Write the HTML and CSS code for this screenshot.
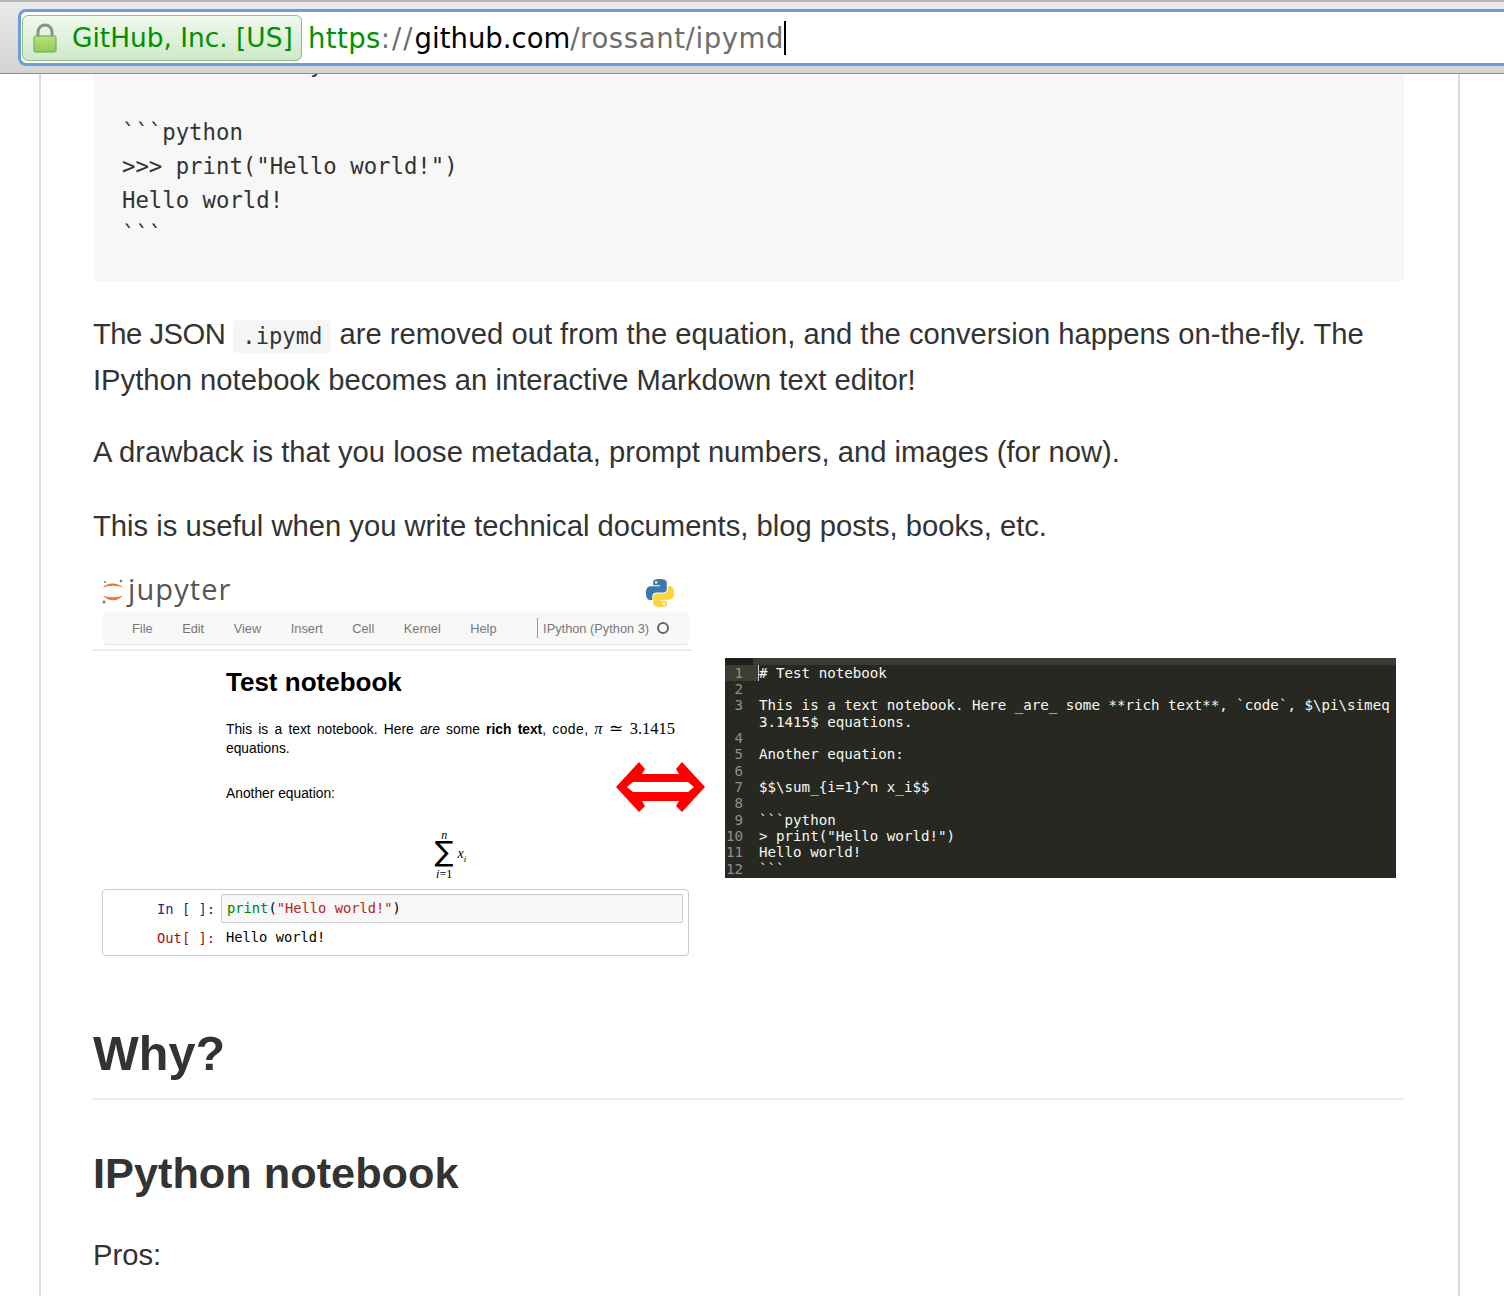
FILE: index.html

```html
<!DOCTYPE html>
<html lang="en">
<head>
  <meta charset="UTF-8" />
  <title>github.com/rossant/ipymd</title>
  <link rel="stylesheet" href="styles.css">
</head>
<body>
  <div class="toolbar">
    <div class="urlbar">
      <div class="identity">
        <svg class="lock" viewBox="0 0 24 30" width="24" height="30">
          <defs>
            <linearGradient id="lockBody" x1="0" y1="0" x2="0" y2="1">
              <stop offset="0" stop-color="#b7e37f"/>
              <stop offset="1" stop-color="#8fca5c"/>
            </linearGradient>
          </defs>
          <path d="M5 14V9a7 7 0 0 1 14 0v5" fill="none" stroke="#8f8f8f" stroke-width="3"/>
          <rect x="1" y="13" width="22" height="16" rx="1.5" fill="url(#lockBody)" stroke="#6fa544"/>
        </svg>
        <span>GitHub, Inc. [US]</span>
      </div>
      <div class="url"><span class="scheme">https</span><span class="slashes">://</span><span class="host">github.com</span><span class="path">/rossant/ipymd</span><span class="caret"></span></div>
    </div>
  </div>

  <div class="article">
    <pre class="codeblock">Here is a story

```python
&gt;&gt;&gt; print("Hello world!")
Hello world!
```</pre>

    <p><span class="lead">The JSON</span> <code>.ipymd</code> are removed out from the equation, and the conversion happens on-the-fly. The IPython notebook becomes an interactive Markdown text editor!</p>
    <p>A drawback is that you loose metadata, prompt numbers, and images (for now).</p>
    <p>This is useful when you write technical documents, blog posts, books, etc.</p>

    <div class="figure">
      <div class="notebook">
        <div class="nb-header">
          <svg class="nb-logo" viewBox="0 0 24 28" width="24" height="28">
            <path d="M2 10C5 4 18 4 22 10C18 7 6 7 2 10Z" fill="#f37726"/>
            <path d="M2 17C6 24 18 24 22 17C18 20 6 20 2 17Z" fill="#f37726"/>
            <circle cx="20" cy="3" r="1.3" fill="#767677"/>
            <circle cx="3" cy="24" r="1.4" fill="#767677"/>
            <circle cx="4" cy="4" r="1" fill="#767677"/>
          </svg>
          <span class="nb-name">jupyter</span>
          <svg class="nb-python" viewBox="0 0 24 24" width="28" height="28">
            <path fill="#3c78aa" fill-rule="evenodd" d="M14.25.18l.9.2.73.26.59.3.45.32.34.34.25.34.16.33.1.3.04.26.02.2-.01.13V8.5l-.05.63-.13.55-.21.46-.26.38-.3.31-.33.25-.35.19-.35.14-.33.1-.3.07-.26.04-.21.02H8.77l-.69.05-.59.14-.5.22-.41.27-.33.32-.27.35-.2.36-.15.37-.1.35-.07.32-.04.27-.02.21v3.06H3.17l-.21-.03-.28-.07-.32-.12-.35-.18-.36-.26-.36-.36-.35-.46-.32-.59-.28-.73-.21-.88-.14-1.05-.05-1.23.06-1.22.16-1.04.24-.87.32-.71.36-.57.4-.44.42-.33.42-.24.4-.16.36-.1.32-.05.24-.01h.16l.06.01h8.16v-.83H6.18l-.01-2.75-.02-.37.05-.34.11-.31.17-.28.25-.26.31-.23.38-.2.44-.18.51-.15.58-.12.64-.1.71-.06.77-.04.84-.02 1.27.05zm-6.3 1.98l-.23.33-.08.41.08.41.23.34.33.22.41.09.41-.09.33-.22.23-.34.08-.41-.08-.41-.23-.33-.33-.22-.41-.09-.41.09z"/>
            <path fill="#ffd43b" fill-rule="evenodd" d="M21.04 6.11l.28.06.32.12.35.18.36.27.36.35.35.47.32.59.28.73.21.88.14 1.04.05 1.23-.06 1.23-.16 1.04-.24.86-.32.71-.36.57-.4.45-.42.33-.42.24-.4.16-.36.09-.32.05-.24.02-.16-.01h-8.22v.82h5.84l.01 2.76.02.36-.05.34-.11.31-.17.29-.25.25-.31.24-.38.2-.44.17-.51.15-.58.13-.64.09-.71.07-.77.04-.84.01-1.27-.04-1.07-.14-.9-.2-.73-.25-.59-.3-.45-.33-.34-.34-.25-.34-.16-.33-.1-.3-.04-.25-.02-.2.01-.13v-5.34l.05-.64.13-.54.21-.46.26-.38.3-.32.33-.24.35-.2.35-.14.33-.1.3-.06.26-.04.21-.02.13-.01h5.84l.69-.05.59-.14.5-.21.41-.28.33-.32.27-.35.2-.36.15-.36.1-.35.07-.32.04-.28.02-.21V6.07h2.09l.14.01zm-6.47 14.25l-.23.33-.08.41.08.41.23.33.33.23.41.08.41-.08.33-.23.23-.33.08-.41-.08-.41-.23-.33-.33-.23-.41-.08-.41.08z"/>
          </svg>
        </div>
        <div class="nb-menu">
          <span>File</span><span>Edit</span><span>View</span><span>Insert</span><span>Cell</span><span>Kernel</span><span>Help</span>
          <div class="nb-kernel">IPython (Python 3)<i class="nb-dot"></i></div>
        </div>
        <div class="nb-body">
          <h2>Test notebook</h2>
          <p class="nb-text">This is a text notebook. Here <em>are</em> some <b>rich text</b>, <span class="nb-code">code</span>, <span class="math"><em>π</em> ≃ 3.1415</span> equations.</p>
          <p class="nb-text nb-another">Another equation:</p>
          <div class="sum math">
            <div class="sum-stack"><em>n</em><span class="sigma">∑</span><em>i</em>=1</div>
            <span class="sum-x"><em>x<sub>i</sub></em></span>
          </div>
        </div>
        <div class="nb-cell">
          <div class="nb-row">
            <span class="prompt in">In [ ]:</span>
            <div class="nb-input"><span class="kw">print</span>(<span class="str">"Hello world!"</span>)</div>
          </div>
          <div class="nb-row nb-row-out">
            <span class="prompt out">Out[ ]:</span>
            <div class="nb-output">Hello world!</div>
          </div>
        </div>
      </div>

      <div class="editor">
        <div class="ed-tabs"></div>
        <div class="ed-lines">
          <span class="ln ln-on">1</span><span class="tx tx-first"># Test notebook</span>
          <span class="ln">2</span><span class="tx"></span>
          <span class="ln">3</span><span class="tx">This is a text notebook. Here _are_ some **rich text**, `code`, $\pi\simeq 3.1415$ equations.</span>
          <span class="ln">4</span><span class="tx"></span>
          <span class="ln">5</span><span class="tx">Another equation:</span>
          <span class="ln">6</span><span class="tx"></span>
          <span class="ln">7</span><span class="tx">$$\sum_{i=1}^n x_i$$</span>
          <span class="ln">8</span><span class="tx"></span>
          <span class="ln">9</span><span class="tx">```python</span>
          <span class="ln">10</span><span class="tx">&gt; print("Hello world!")</span>
          <span class="ln">11</span><span class="tx">Hello world!</span>
          <span class="ln">12</span><span class="tx">```</span>
        </div>
      </div>

      <svg class="swap" viewBox="0 0 90 52" width="90" height="52">
        <path fill="#ff0000" fill-rule="evenodd" d="M0 25L23 0L29 7L26 12H63L60 7L66 0L89 25L66 50L60 44L63 39H26L29 44L23 50ZM11 25L17 30H72L78 25L72 20H17Z"/>
      </svg>
    </div>

    <h1>Why?</h1>
    <h2 class="section">IPython notebook</h2>
    <p class="pros">Pros:</p>
  </div>
</body>
</html>
```

FILE: styles.css

```css
html, body {
  margin: 0;
  height: 1296px;
  overflow: hidden;
  background: #fff;
}
body {
  font-family: "Liberation Sans", Arial, sans-serif;
  color: #333;
}

/* browser chrome */
.toolbar {
  height: 74px;
  box-sizing: border-box;
  padding: 7px 0 0 18px;
  background: linear-gradient(#e9e9e9, #d4d4d4);
  border-top: 2px solid #b5b5b5;
  border-bottom: 1px solid #8e8e8e;
}
.urlbar {
  display: flex;
  align-items: center;
  height: 57px;
  box-sizing: border-box;
  padding-left: 1px;
  background: #fff;
  border: 3px solid #6d9fd6;
  border-right: none;
  border-radius: 8px 0 0 8px;
}
.identity {
  display: flex;
  align-items: center;
  width: 280px;
  height: 46px;
  box-sizing: border-box;
  padding-left: 10px;
  gap: 15px;
  color: #009000;
  font-family: "DejaVu Sans", sans-serif;
  font-size: 26.4px;
  background: linear-gradient(#f0faee, #cfe8c9);
  border: 1px solid #8fbe85;
  border-radius: 6px;
  white-space: nowrap;
}
.url {
  display: flex;
  align-items: center;
  margin-left: 6px;
  padding-top: 1px;
  font-family: "DejaVu Sans", sans-serif;
  font-size: 27.5px;
  white-space: nowrap;
}
.scheme { color: #009000; letter-spacing: .4px; }
.slashes { color: #6e6e6e; letter-spacing: 2px; }
.host { color: #000; }
.path { color: #6e6e6e; letter-spacing: .6px; }
.caret {
  width: 2px;
  height: 34px;
  background: #000;
}

/* article */
.article {
  height: 1222px;
  margin: 0 44px 0 39px;
  padding: 0 54px 0 52px;
  overflow: hidden;
  border-left: 2px solid #ddd;
  border-right: 2px solid #ddd;
}
.codeblock {
  margin: -27px 0 0 1px;
  padding: 0 28px 30px;
  background: #f7f7f7;
  font-family: "DejaVu Sans Mono", monospace;
  font-size: 22.3px;
  line-height: 34px;
  color: #333;
}
.article > p {
  margin: 26px 0 0;
  font-size: 29.2px;
  line-height: 46px;
}
.codeblock + p { padding-top: 4px; }
.article > p + p + p { margin-top: 28px; }
.lead { letter-spacing: -.5px; }
.article > p code {
  display: inline-block;
  padding: 0 9px;
  line-height: 33px;
  background: #f5f5f5;
  border-radius: 4px;
  font-family: "DejaVu Sans Mono", monospace;
  font-size: 22.15px;
}

/* figure with the notebook and the editor */
.figure {
  position: relative;
  display: flex;
  align-items: flex-start;
  gap: 32px;
  margin-top: 23px;
  color: #000;
}
.notebook {
  width: 600px;
  flex: none;
}
.nb-header {
  display: flex;
  align-items: flex-start;
  height: 40px;
  padding: 6px 19px 0 8px;
  box-sizing: border-box;
  color: #555;
}
.nb-logo { margin-right: 3px; }
.nb-name {
  margin-top: -9px;
  font-family: "Open Sans", sans-serif;
  font-size: 29px;
  letter-spacing: 1.1px;
}
.nb-python { margin-left: auto; margin-top: 1px; }
.nb-menu {
  display: flex;
  align-items: center;
  gap: 29.5px;
  height: 33px;
  margin: 0 4px 0 10px;
  padding-left: 29px;
  box-sizing: border-box;
  background: #f8f8f8;
  border-radius: 0 0 4px 4px;
  border-bottom: 1px solid #e7e7e7;
  font-size: 12.8px;
  color: #777;
}
.nb-kernel {
  display: flex;
  align-items: center;
  gap: 8px;
  height: 20px;
  margin-left: 11px;
  padding-left: 5px;
  border-left: 1px solid #999;
}
.nb-dot {
  width: 8px;
  height: 8px;
  border: 2px solid #666;
  border-radius: 50%;
}
.nb-body {
  padding: 4px 18px 0 133px;
  border-top: 2px solid #eee;
  margin-top: 4px;
}
.nb-body h2 {
  margin: 0;
  padding-top: 12px;
  font-size: 26px;
  line-height: 30px;
}
.nb-text {
  margin: 0;
  padding-top: 22px;
  font-size: 13.8px;
  line-height: 19px;
  text-align: justify;
}
.nb-another { padding-top: 26px; }
.nb-code { letter-spacing: .5px; }
.math { font-family: "Liberation Serif", serif; font-size: 16.5px; }
.sum {
  display: flex;
  justify-content: center;
  align-items: center;
  gap: 4px;
  height: 60px;
  margin: 22px 0 0;
}
.sum-stack {
  font-size: 12px;
  line-height: 11px;
  text-align: center;
}
.sum-stack em { font-size: 12px; }
.sigma {
  display: block;
  margin: -3px 0 3px;
  font-size: 28px;
  line-height: 28px;
  font-family: "DejaVu Sans", sans-serif;
}
.sum-x { font-size: 14px; }
.sum-x sub { font-size: 9px; }
.nb-cell {
  margin: 4px 4px 0 9px;
  padding: 4px 5px 0 0;
  height: 67px;
  box-sizing: border-box;
  border: 1px solid #ccc;
  border-radius: 4px;
  font-family: "DejaVu Sans Mono", monospace;
  font-size: 13.75px;
}
.nb-row {
  display: flex;
  align-items: center;
  gap: 6px;
}
.nb-row-out { margin-top: 1px; }
.prompt {
  width: 112px;
  flex: none;
  text-align: right;
}
.in { color: #1a2a8a; }
.out { color: #a01010; }
.nb-input {
  flex: 1;
  height: 29px;
  box-sizing: border-box;
  padding-left: 5px;
  line-height: 27px;
  background: #f7f7f7;
  border: 1px solid #cfcfcf;
  border-radius: 2px;
}
.nb-output { height: 27px; padding-left: 5px; line-height: 27px; }
.kw { color: #008000; }
.str { color: #ba2121; }

.editor {
  width: 671px;
  flex: none;
  margin-top: 86px;
  padding-bottom: 1px;
  background: #272822;
  font-family: "DejaVu Sans Mono", monospace;
  font-size: 14.17px;
  line-height: 16.36px;
  color: #f8f8f2;
}
.ed-tabs {
  height: 6.5px;
  background: linear-gradient(90deg, #1e1e1c 28px, #3a3a36 28px);
}
.ed-lines {
  display: grid;
  grid-template-columns: 34px 1fr;
}
.ln {
  padding-right: 16px;
  width: 18px;
  text-align: right;
  color: #8f908a;
  white-space: nowrap;
}
.ln-on { background: #3e3d32; }
.tx { min-height: 16.36px; white-space: pre-wrap; }
.tx-first { border-left: 1px solid #ccc; margin-left: -1px; }
.swap {
  position: absolute;
  left: 523px;
  top: 190px;
}

h1, .section {
  margin: 0;
  font-weight: bold;
  color: #333;
}
h1 {
  margin-top: 66px;
  padding-bottom: 14px;
  font-size: 48.5px;
  line-height: 62px;
  border-bottom: 2px solid #eee;
}
.section {
  margin-top: 47px;
  font-size: 43.3px;
  line-height: 52px;
}
.article > .pros { margin-top: 33px; }
```
